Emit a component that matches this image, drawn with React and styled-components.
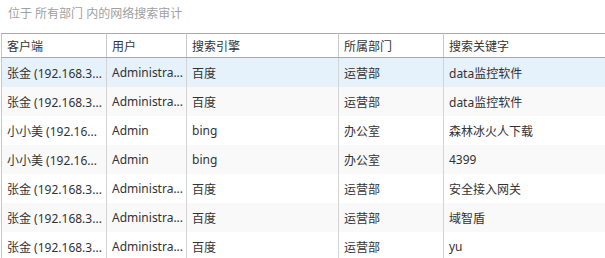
import React from "react";
import styled, { createGlobalStyle } from "styled-components";

const rows = [
  { client: "张金 (192.168.3...", user: "Administra...", engine: "百度", dept: "运营部", keyword: "data监控软件" },
  { client: "张金 (192.168.3...", user: "Administra...", engine: "百度", dept: "运营部", keyword: "data监控软件" },
  { client: "小小美 (192.16...", user: "Admin", engine: "bing", dept: "办公室", keyword: "森林冰火人下载" },
  { client: "小小美 (192.16...", user: "Admin", engine: "bing", dept: "办公室", keyword: "4399" },
  { client: "张金 (192.168.3...", user: "Administra...", engine: "百度", dept: "运营部", keyword: "安全接入网关" },
  { client: "张金 (192.168.3...", user: "Administra...", engine: "百度", dept: "运营部", keyword: "域智盾" },
  { client: "张金 (192.168.3...", user: "Administra...", engine: "百度", dept: "运营部", keyword: "yu" },
];

const columns = [
  { key: "client", title: "客户端", width: 105 },
  { key: "user", title: "用户", width: 80 },
  { key: "engine", title: "搜索引擎", width: 152 },
  { key: "dept", title: "所属部门", width: 105 },
  { key: "keyword", title: "搜索关键字" },
];

const App = () => {
  return (
    <Page>
      <GlobalStyle />
      <Caption>位于 所有部门 内的网络搜索审计</Caption>
      <Table>
        <colgroup>
          {columns.map((c) => (
            <col key={c.key} style={c.width ? { width: c.width } : undefined} />
          ))}
        </colgroup>
        <thead>
          <tr>
            {columns.map((c) => (
              <HeadCell key={c.key}>{c.title}</HeadCell>
            ))}
          </tr>
        </thead>
        <tbody>
          {rows.map((r, i) => (
            <Row key={i} $selected={i === 0} $striped={i % 2 === 1}>
              {columns.map((c) => (
                <Cell key={c.key}>{r[c.key]}</Cell>
              ))}
            </Row>
          ))}
        </tbody>
      </Table>
    </Page>
  );
};

export default App;

const GlobalStyle = createGlobalStyle`
  html, body {
    margin: 0;
    padding: 0;
    background: #ffffff;
    overflow: hidden;
  }
  body {
    font-family: "Noto Sans", "Noto Sans CJK SC", sans-serif;
  }
`;

const Page = styled.div`
  width: 605px;
  height: 258px;
  overflow: hidden;
  background: #ffffff;
`;

const Caption = styled.div`
  height: 33px;
  padding: 4px 0 0 8px;
  box-sizing: border-box;
  font-size: 12px;
  line-height: 20px;
  color: #a0a0a0;
`;

const Table = styled.table`
  width: 604px;
  margin-left: 1px;
  border-collapse: collapse;
  table-layout: fixed;
  border-left: 1px solid #c8c8c8;
  font-size: 12px;
  color: #333333;
`;

const HeadCell = styled.th`
  height: 23px;
  padding: 0 5px;
  text-align: left;
  font-weight: normal;
  border-top: 1px solid #a8a8a8;
  border-bottom: 1px solid #a8a8a8;
  border-right: 1px solid #c8c8c8;
  white-space: nowrap;
  overflow: hidden;
  &:last-child {
    border-right: none;
  }
`;

const Row = styled.tr`
  background: ${(p) => (p.$selected ? "#e5f1fb" : p.$striped ? "#f9f9f9" : "#ffffff")};
`;

const Cell = styled.td`
  height: 29px;
  padding: 0 5px;
  border-right: 1px solid #d4d4d4;
  white-space: nowrap;
  overflow: hidden;
  &:last-child {
    border-right: none;
  }
`;
